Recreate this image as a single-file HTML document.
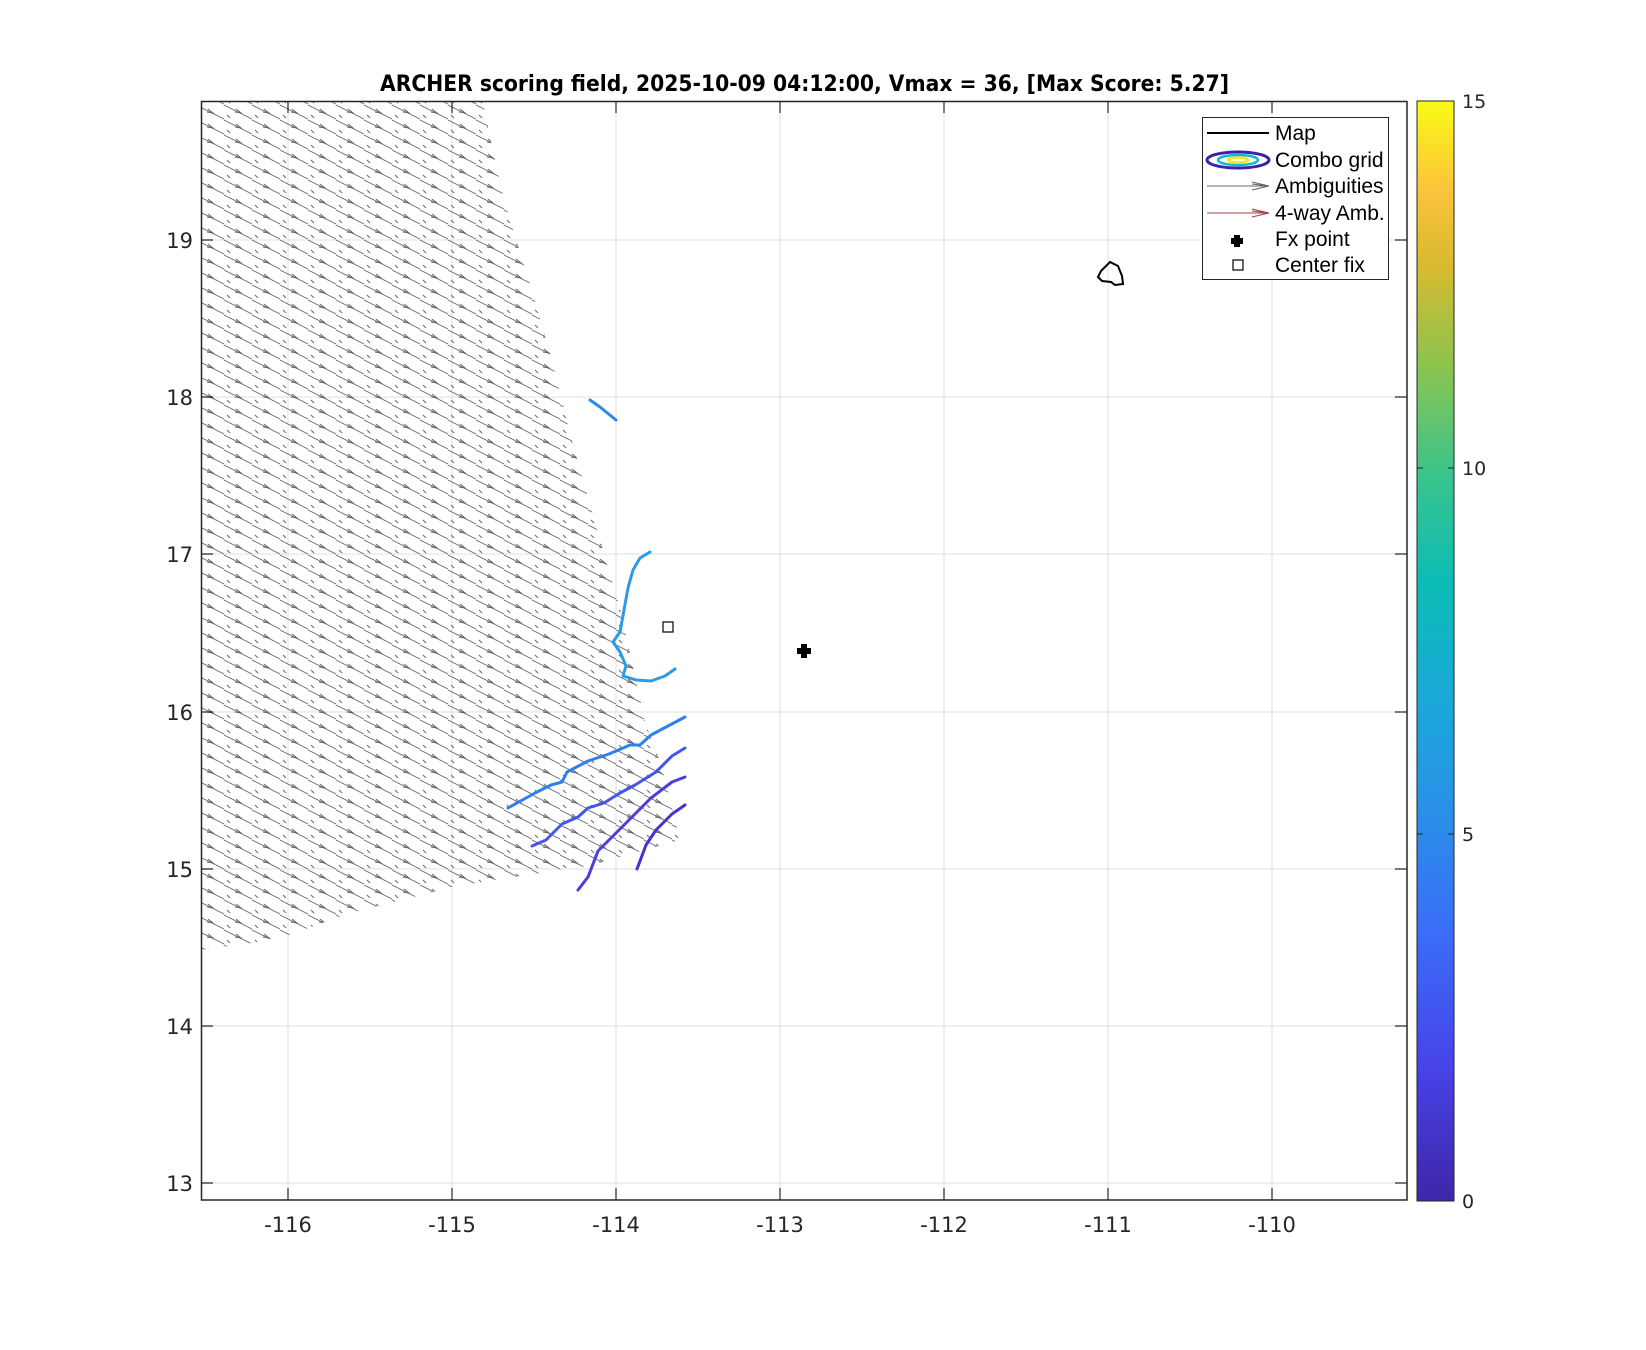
<!DOCTYPE html>
<html><head><meta charset="utf-8"><style>
html,body{margin:0;padding:0;background:#fff;}
svg{display:block;font-family:"DejaVu Sans","Liberation Sans",sans-serif;}
</style></head><body>
<svg width="1646" height="1350" viewBox="0 0 1646 1350" xmlns="http://www.w3.org/2000/svg">
<defs>
<pattern id="arr" patternUnits="userSpaceOnUse" width="28" height="15">
<line x1="-2" y1="-1" x2="30" y2="15" stroke="#6a6a6a" stroke-width="0.9"/>
<line x1="-2" y1="14" x2="30" y2="30" stroke="#6a6a6a" stroke-width="0.9"/>
<line x1="-2" y1="-16" x2="30" y2="0" stroke="#6a6a6a" stroke-width="0.9"/>
<path d="M12 4 l5 4 l-6 -1 M3 10 l3 3" stroke="#666" stroke-width="1" fill="none"/>
</pattern>
<clipPath id="reg"><polygon points="202,101 483,101 490,137 504,200 515,236 530,284 551,357 572,441 599,536 620,609 646,725 662,767 680,840 588,866 494,880 452,887 347,914 289,935 252,943 202,950"/></clipPath>
<linearGradient id="par" x1="0" y1="1" x2="0" y2="0">
<stop offset="0" stop-color="#3e26a8"/>
<stop offset="0.12" stop-color="#4743e8"/>
<stop offset="0.24" stop-color="#3b6cf8"/>
<stop offset="0.35" stop-color="#2a8fe8"/>
<stop offset="0.46" stop-color="#1aaad8"/>
<stop offset="0.56" stop-color="#0bbcb6"/>
<stop offset="0.66" stop-color="#3ac48c"/>
<stop offset="0.76" stop-color="#8cc44e"/>
<stop offset="0.85" stop-color="#d8ba30"/>
<stop offset="0.92" stop-color="#fcc33a"/>
<stop offset="1" stop-color="#f9fb15"/>
</linearGradient>
</defs>
<g stroke="#dfdfdf" stroke-width="1">
<line x1="288" y1="101" x2="288" y2="1200"/><line x1="452" y1="101" x2="452" y2="1200"/><line x1="616" y1="101" x2="616" y2="1200"/><line x1="780" y1="101" x2="780" y2="1200"/><line x1="944" y1="101" x2="944" y2="1200"/><line x1="1108" y1="101" x2="1108" y2="1200"/><line x1="1272" y1="101" x2="1272" y2="1200"/>
<line x1="201" y1="240" x2="1407" y2="240"/><line x1="201" y1="397" x2="1407" y2="397"/><line x1="201" y1="554" x2="1407" y2="554"/><line x1="201" y1="712" x2="1407" y2="712"/><line x1="201" y1="869" x2="1407" y2="869"/><line x1="201" y1="1026" x2="1407" y2="1026"/><line x1="201" y1="1183" x2="1407" y2="1183"/>
</g>
<rect x="201" y="101" width="500" height="860" fill="url(#arr)" clip-path="url(#reg)"/>
<g stroke="#262626" stroke-width="1.2">
<path d="M288 101v12M452 101v12M616 101v12M780 101v12M944 101v12M1108 101v12M1272 101v12M288 1200v-12M452 1200v-12M616 1200v-12M780 1200v-12M944 1200v-12M1108 1200v-12M1272 1200v-12"/>
<path d="M201 240h12M201 397h12M201 554h12M201 712h12M201 869h12M201 1026h12M201 1183h12M1407 240h-12M1407 397h-12M1407 554h-12M1407 712h-12M1407 869h-12M1407 1026h-12M1407 1183h-12"/>
</g>
<rect x="201.5" y="101.5" width="1205.5" height="1098.5" fill="none" stroke="#262626" stroke-width="1.5"/>
<g fill="none" stroke-width="3" stroke-linejoin="round" stroke-linecap="round">
<polyline stroke="#2b8ae8" points="590,400 600,407 616,420"/>
<polyline stroke="#2b9ae8" points="650,552 640,558 633,570 628,588 624,610 620,632 613,642 620,652 626,666 623,676 636,680 651,681 665,676 675,669"/>
<polyline stroke="#2e7ff0" points="508,808 535,793 551,785 562,782 567,772 588,761 609,754 630,745 640,745 651,735 685,717"/>
<polyline stroke="#4455ee" points="532,846 546,840 562,824 578,817 588,808 604,803 620,793 635,785 656,772 672,756 685,748"/>
<polyline stroke="#4a3ee0" points="578,890 588,877 598,851 614,835 625,824 635,814 651,798 672,782 685,777"/>
<polyline stroke="#4a30d0" points="637,869 646,845 656,830 672,814 685,805"/>
</g>
<rect x="663" y="622" width="10" height="10" fill="#fff" stroke="#000" stroke-width="1.2"/>
<path d="M801 644h6v4h4v6h-4v4h-6v-4h-4v-6h4z" fill="#000"/>
<path d="M1110 262 L1101 271 L1098 277 L1102 281 L1111 282 L1115 285 L1123 284 L1122 276 L1118 266 Z" fill="none" stroke="#000" stroke-width="2"/>
<rect x="1202.5" y="117.5" width="186" height="162" fill="#fff" stroke="#262626" stroke-width="1"/>
<line x1="1207" y1="133" x2="1269" y2="133" stroke="#000" stroke-width="2"/>
<ellipse cx="1238" cy="160" rx="31" ry="8" fill="none" stroke="#3a22b0" stroke-width="3"/>
<ellipse cx="1238" cy="160" rx="20" ry="5" fill="none" stroke="#10b8c8" stroke-width="2.5"/>
<ellipse cx="1238" cy="160" rx="10" ry="2.5" fill="none" stroke="#f5e81a" stroke-width="2.5"/>
<path d="M1207 186H1269M1252 182l17 4l-17 4M1252 184l17 2" stroke="#666" stroke-width="1" fill="none"/>
<path d="M1207 213H1269M1252 209l17 4l-17 4M1252 211l17 2" stroke="#a04545" stroke-width="1" fill="none"/>
<path d="M1234 235h6v3h3v6h-3v3h-6v-3h-3v-6h3z" fill="#000"/>
<rect x="1233" y="260" width="10" height="10" fill="#fff" stroke="#000" stroke-width="1.2"/>
<g font-size="21" fill="#000" font-family="Liberation Sans, sans-serif">
<text x="1275" y="140">Map</text>
<text x="1275" y="167">Combo grid</text>
<text x="1275" y="193">Ambiguities</text>
<text x="1275" y="220">4-way Amb.</text>
<text x="1275" y="246">Fx point</text>
<text x="1275" y="272">Center fix</text>
</g>
<rect x="1417" y="101" width="37" height="1100" fill="url(#par)" stroke="#262626" stroke-width="1"/>
<g stroke="#262626" stroke-width="1"><path d="M1454 101h-6M1454 468h-6M1454 834h-6M1454 1201h-6M1417 468h6M1417 834h6"/></g>
<g font-size="19" fill="#262626">
<text x="1462" y="108">15</text><text x="1462" y="475">10</text><text x="1462" y="841">5</text><text x="1462" y="1208">0</text>
</g>
<g font-size="21" fill="#262626" text-anchor="middle">
<text x="288" y="1232">-116</text><text x="452" y="1232">-115</text><text x="616" y="1232">-114</text><text x="780" y="1232">-113</text><text x="944" y="1232">-112</text><text x="1108" y="1232">-111</text><text x="1272" y="1232">-110</text>
</g>
<g font-size="21" fill="#262626" text-anchor="end">
<text x="193" y="248">19</text><text x="193" y="405">18</text><text x="193" y="562">17</text><text x="193" y="720">16</text><text x="193" y="877">15</text><text x="193" y="1034">14</text><text x="193" y="1191">13</text>
</g>
<text x="380" y="91" font-size="22" font-weight="bold" fill="#000" textLength="849" lengthAdjust="spacingAndGlyphs">ARCHER scoring field, 2025-10-09 04:12:00, Vmax = 36, [Max Score: 5.27]</text>
</svg>
</body></html>
